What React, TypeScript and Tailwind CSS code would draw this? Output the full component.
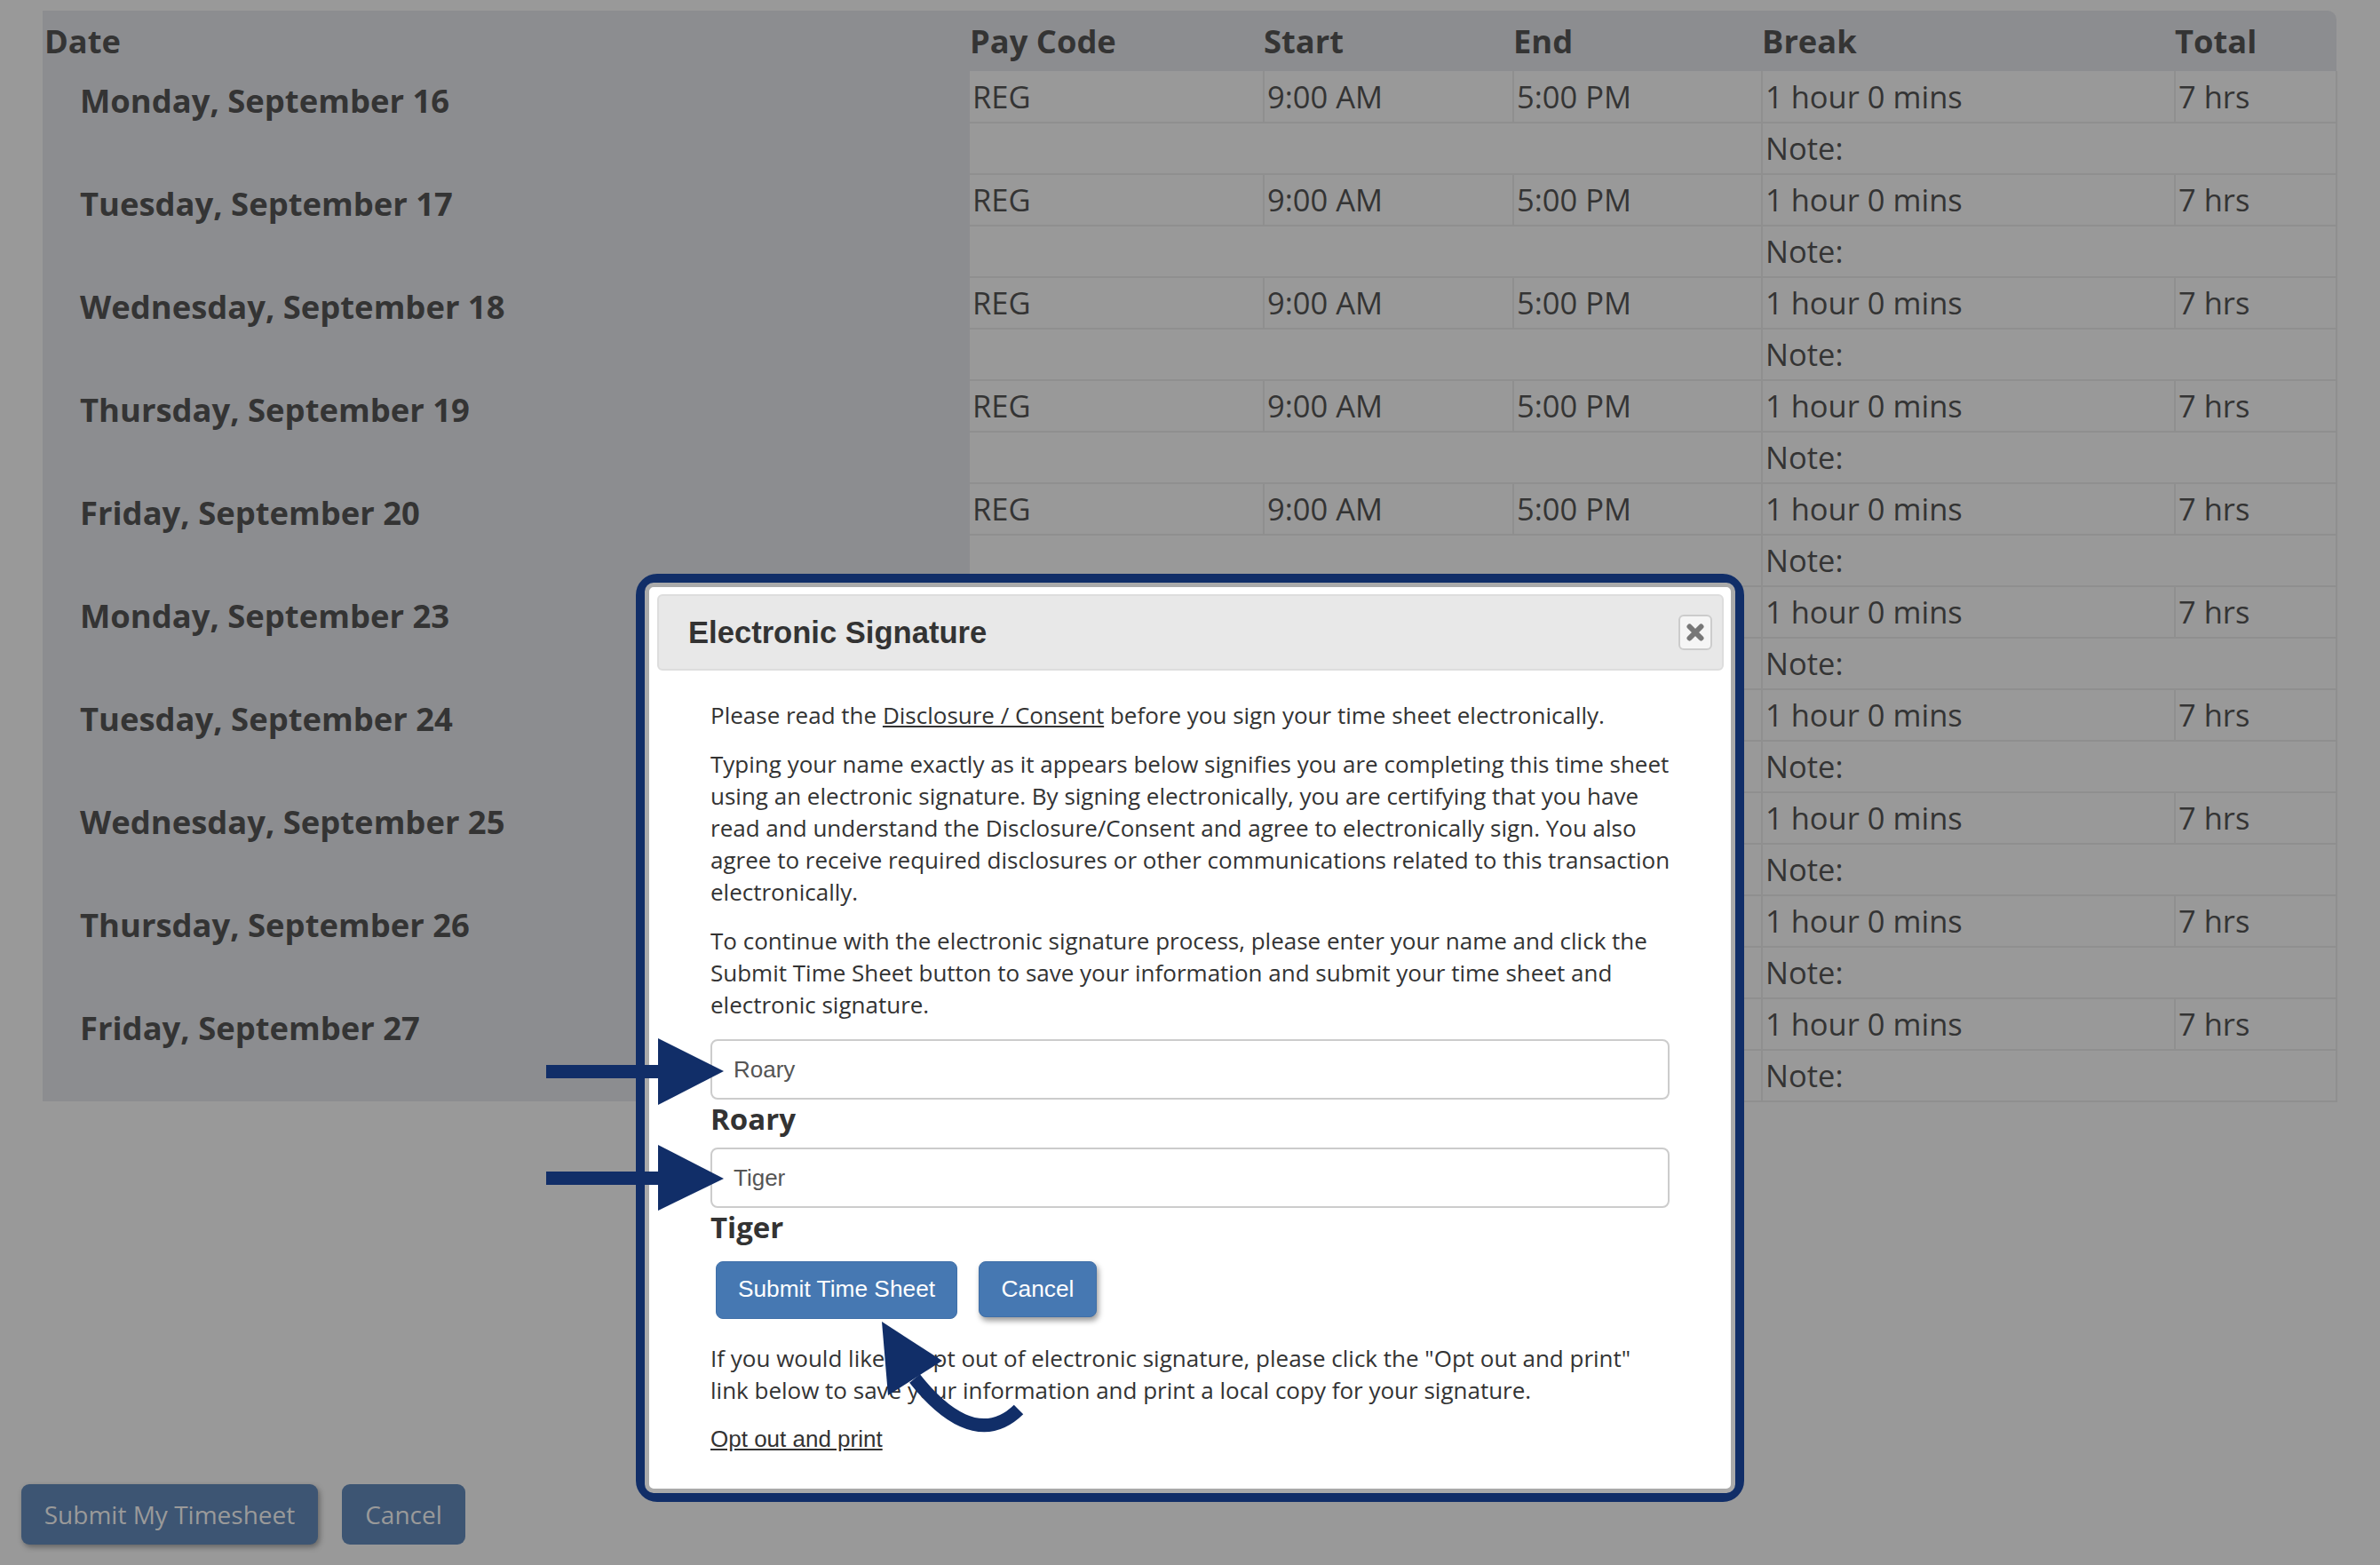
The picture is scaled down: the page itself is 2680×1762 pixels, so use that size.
const days = [
  "Monday, September 16",
  "Tuesday, September 17",
  "Wednesday, September 18",
  "Thursday, September 19",
  "Friday, September 20",
  "Monday, September 23",
  "Tuesday, September 24",
  "Wednesday, September 25",
  "Thursday, September 26",
  "Friday, September 27",
];

const cols = ["Date", "Pay Code", "Start", "End", "Break", "Total"];
const cell = "h-[58px] p-0 pl-[3px] border-b-2 border-[#8f8f8f] align-middle";
const sep = "border-l-2";

const App = () => {
  return (
    <div className="relative h-[1762px] w-[2680px] overflow-hidden bg-[#999999] font-['Open_Sans',sans-serif] text-[#343434]">
      <div className="pl-[48px] pt-[12px]">
        <table className="w-[2583px] table-fixed border-collapse text-[34.5px]">
          <colgroup>
            <col className="w-[1044px]" />
            <col className="w-[331px]" />
            <col className="w-[281px]" />
            <col className="w-[280px]" />
            <col className="w-[465px]" />
            <col className="w-[182px]" />
          </colgroup>
          <thead>
            <tr className="h-[68px] bg-[#8c8d90]">
              {cols.map((c) => (
                <th key={c} className="p-0 text-left text-[36.3px] font-bold first:pl-[2px] last:rounded-tr-[10px]">
                  {c}
                </th>
              ))}
            </tr>
          </thead>
          <tbody>
            {days.map((d, i) => (
              <>
                <tr key={d}>
                  <td rowSpan={2} className="bg-[#8c8d90] p-0 pl-[42px] pt-[6px] align-top text-[36.4px] font-bold">
                    {d}
                  </td>
                  {/* rows from the sixth on sit behind the modal here */}
                  <td className={cell}>{i < 5 && "REG"}</td>
                  <td className={`${cell} ${sep}`}>{i < 5 && "9:00 AM"}</td>
                  <td className={`${cell} ${sep}`}>{i < 5 && "5:00 PM"}</td>
                  <td className={`${cell} ${sep}`}>1 hour 0 mins</td>
                  <td className={`${cell} ${sep} border-r-2`}>7 hrs</td>
                </tr>
                <tr key={`${d}-note`}>
                  <td colSpan={3} className={cell}></td>
                  <td colSpan={2} className={`${cell} ${sep} border-r-2`}>Note:</td>
                </tr>
              </>
            ))}
          </tbody>
        </table>

        <div className="-ml-[24px] mt-[430px] flex gap-[27px] text-[28px] text-[#9a9a9a]">
          <button className="h-[68px] w-[334px] rounded-[9px] bg-[#3d5573] shadow-[2px_3px_6px_rgba(0,0,0,0.35)]">Submit My Timesheet</button>
          <button className="h-[68px] w-[139px] rounded-[9px] bg-[#3d5573]">Cancel</button>
        </div>
      </div>

      {/* modal */}
      <div className="absolute left-[716px] top-[646px] h-[1045px] w-[1248px] rounded-[24px] border-[10px] border-[#112e68]">
        <div className="h-full rounded-[10px] border-[5px] border-[#aaaaaa] bg-white py-[8px] pl-[9px] pr-[8px]">
          <div className="flex h-[86px] items-center justify-between rounded-[6px] border-2 border-[#dddddd] bg-[#e8e8e8] pl-[33px] pr-[11px]">
            <h2 className="pt-[2px] font-['Liberation_Sans',Arial,sans-serif] text-[34.6px] font-bold text-[#333333]">Electronic Signature</h2>
            <button className="flex h-[40px] w-[38px] items-center justify-center rounded-[6px] border-2 border-[#cccccc] bg-[#f5f5f5]">
              <svg width="20" height="20" viewBox="0 0 20 20">
                <path d="M3.5 3.5 L16.5 16.5 M16.5 3.5 L3.5 16.5" stroke="#777777" strokeWidth="6" strokeLinecap="round" />
              </svg>
            </button>
          </div>

          <div className="w-[1150px] pl-[60px] pt-[32px] text-[26px] leading-[36px] text-[#333333]">
            <p>Please read the <span className="underline">Disclosure / Consent</span> before you sign your time sheet electronically.</p>
            <p className="mt-[19px]">
              Typing your name exactly as it appears below signifies you are completing this time sheet using an electronic signature. By signing electronically, you are certifying that you have read and understand the Disclosure/Consent and agree to electronically sign. You also agree to receive required disclosures or other communications related to this transaction electronically.
            </p>
            <p className="mt-[19px]">
              To continue with the electronic signature process, please enter your name and click the Submit Time Sheet button to save your information and submit your time sheet and electronic signature.
            </p>

            <div className="mt-[21px] flex h-[68px] w-[1080px] items-center rounded-[8px] border-2 border-[#cccccc] pl-[24px] font-['Liberation_Sans',Arial,sans-serif] text-[26px] text-[#555555]">Roary</div>
            <div className="h-[54px] text-[33px] font-bold leading-[44px]">Roary</div>
            <div className="flex h-[68px] w-[1080px] items-center rounded-[8px] border-2 border-[#cccccc] pl-[24px] font-['Liberation_Sans',Arial,sans-serif] text-[26px] text-[#555555]">Tiger</div>
            <div className="h-[60px] text-[33px] font-bold leading-[44px]">Tiger</div>

            <div className="flex items-start gap-[24px] pl-[6px] font-['Liberation_Sans',Arial,sans-serif] text-[26.3px] text-white">
              <button className="h-[65px] w-[272px] rounded-[8px] border border-[#3f6fa8] bg-[#4678b2] pb-[3px]">Submit Time Sheet</button>
              <button className="h-[63px] w-[133px] rounded-[8px] border border-[#3f6fa8] bg-[#4678b2] pb-[2px] shadow-[2px_4px_6px_rgba(0,0,0,0.4)]">Cancel</button>
            </div>

            <p className="mt-[26px] w-[1080px]">
              If you would like to opt out of electronic signature, please click the "Opt out and print" link below to save your information and print a local copy for your signature.
            </p>
            <p className="mt-[19px] font-['Liberation_Sans',Arial,sans-serif] text-[26px] underline">Opt out and print</p>
          </div>
        </div>
      </div>

      {/* annotation arrows */}
      <svg className="absolute inset-0" width="2680" height="1762" viewBox="0 0 2680 1762">
        <g fill="#112e68">
          <rect x="615" y="1199" width="130" height="15" />
          <polygon points="741,1169 815,1206 741,1244" />
          <rect x="615" y="1319" width="130" height="15" />
          <polygon points="741,1289 815,1327 741,1363" />
          <polygon points="993,1488 1061,1532 1000,1571" />
        </g>
        <path d="M1030 1552 C1060 1590 1105 1628 1147 1587" fill="none" stroke="#112e68" strokeWidth="15" />
      </svg>
    </div>
  );
};

export default App;
